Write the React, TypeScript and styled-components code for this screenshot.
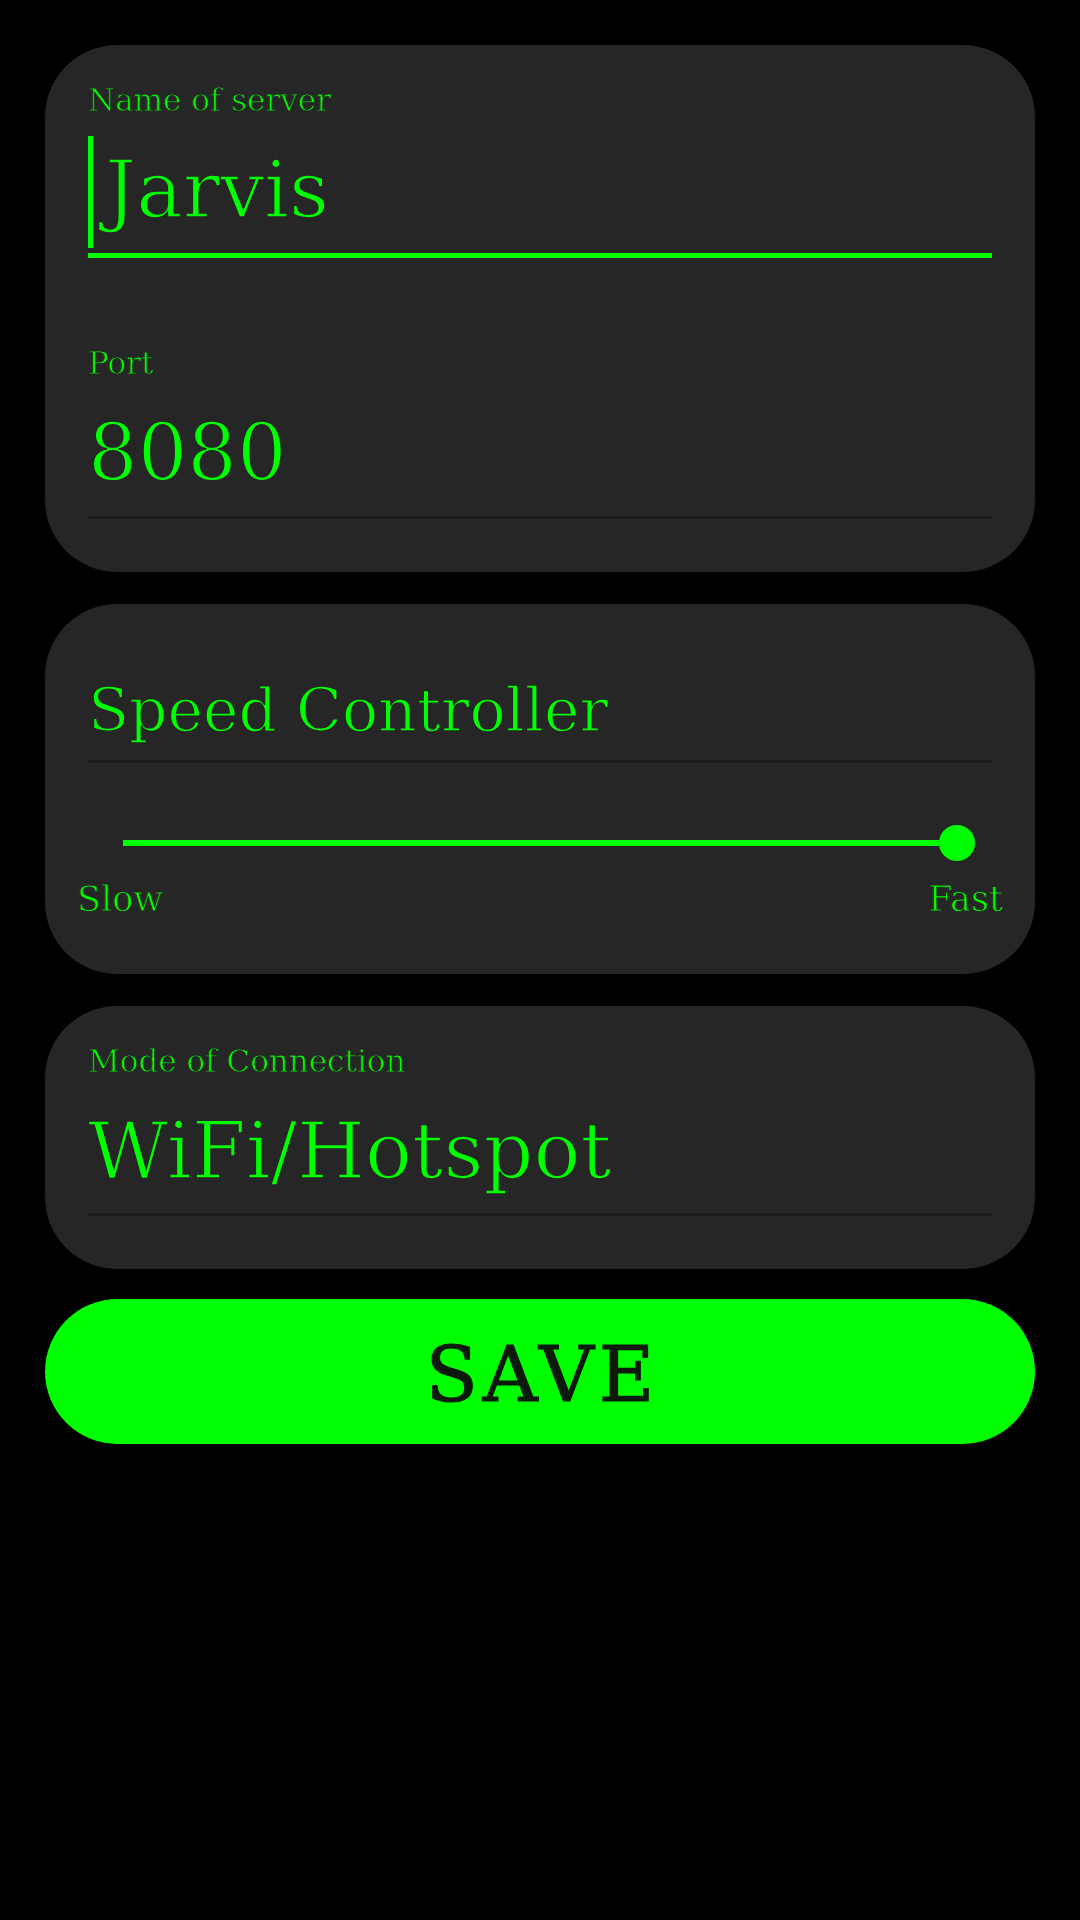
import React from "react";
import styled, { createGlobalStyle } from "styled-components";

const GREEN = "#00ff00";
const CARD_BG = "#262626";
const RULE_DARK = "#1a1a1a";
const INK = "#0c1a0c";
const SERIF = `"DejaVu Serif", "Liberation Serif", serif`;

const Global = createGlobalStyle`
  html, body { margin: 0; padding: 0; background: #000; }
  body { min-height: 1920px; font-family: ${SERIF}; color: ${GREEN}; }
  * { box-sizing: border-box; }
`;

const Page = styled.main`
  display: flex;
  flex-direction: column;
  gap: 32px;
  padding: 45px 45px 0;
`;

const Card = styled.section<{ $pt: number; $pb: number }>`
  background: ${CARD_BG};
  border-radius: 72px;
  padding: ${(p) => p.$pt}px 43px ${(p) => p.$pb}px;
  display: flex;
  flex-direction: column;
`;

const Field = styled.div<{ $mt?: number }>`
  display: flex;
  flex-direction: column;
  margin-top: ${(p) => p.$mt ?? 0}px;
`;

const FieldLabel = styled.label`
  font-family: ${SERIF};
  font-size: 31px;
  line-height: 31px;
  height: 31px;
  color: ${GREEN};
  -webkit-text-stroke: 0.9px ${CARD_BG};
  margin-bottom: 20px;
  white-space: nowrap;
`;

const InputRow = styled.div`
  display: flex;
  align-items: flex-start;
  height: 112px;
  gap: 7px;
`;

const Caret = styled.span`
  width: 5px;
  height: 112px;
  background: ${GREEN};
  flex: none;
`;

const InputText = styled.span<{ $shift?: number }>`
  font-family: ${SERIF};
  font-size: 78px;
  line-height: 108px;
  color: ${GREEN};
  -webkit-text-stroke: 1.7px ${CARD_BG};
  white-space: nowrap;
  margin-left: ${(p) => p.$shift ?? 0}px;
`;

const Rule = styled.div<{ $thick: number; $color: string; $mt: number }>`
  height: ${(p) => p.$thick}px;
  background: ${(p) => p.$color};
  margin-top: ${(p) => p.$mt}px;
`;

const Title = styled.h2`
  margin: 0;
  font-family: ${SERIF};
  font-weight: normal;
  font-size: 60px;
  line-height: 60px;
  height: 60px;
  color: ${GREEN};
  -webkit-text-stroke: 1.4px ${CARD_BG};
  white-space: nowrap;
`;

const SliderArea = styled.div`
  display: flex;
  flex-direction: column;
  margin: 62px -11px 0;
`;

const SliderRow = styled.div`
  display: flex;
  align-items: center;
  height: 36px;
  padding: 0 28px 0 46px;
`;

const Track = styled.div`
  flex: 1;
  height: 6px;
  background: ${GREEN};
`;

const Thumb = styled.div`
  width: 36px;
  height: 36px;
  border-radius: 50%;
  background: ${GREEN};
  flex: none;
`;

const SliderLabels = styled.div`
  display: flex;
  justify-content: space-between;
  margin-top: 21px;
`;

const SliderLabel = styled.span`
  font-family: ${SERIF};
  font-size: 35px;
  line-height: 35px;
  color: ${GREEN};
  -webkit-text-stroke: 0.9px ${CARD_BG};
`;

const SaveButton = styled.button`
  height: 145px;
  margin-top: -2px;
  border: none;
  border-radius: 73px;
  background: ${GREEN};
  display: flex;
  align-items: center;
  justify-content: center;
  padding: 6px 0 0 5px;
  cursor: pointer;
`;

const SaveText = styled.span`
  font-family: ${SERIF};
  font-weight: normal;
  font-size: 76px;
  line-height: 76px;
  color: ${INK};
  -webkit-text-stroke: 1.2px ${INK};
  letter-spacing: 5px;
`;

export default function App() {
  return (
    <>
      <Global />
      <Page>
        <Card $pt={40} $pb={53}>
          <Field>
            <FieldLabel>Name of server</FieldLabel>
            <InputRow>
              <Caret />
              <InputText $shift={5}>Jarvis</InputText>
            </InputRow>
            <Rule $thick={5} $color={GREEN} $mt={5} />
          </Field>
          <Field $mt={90}>
            <FieldLabel>Port</FieldLabel>
            <InputRow>
              <InputText>8080</InputText>
            </InputRow>
            <Rule $thick={3} $color={RULE_DARK} $mt={5} />
          </Field>
        </Card>

        <Card $pt={76} $pb={57}>
          <Title>Speed Controller</Title>
          <Rule $thick={3} $color={RULE_DARK} $mt={20} />
          <SliderArea>
            <SliderRow>
              <Track />
              <Thumb />
            </SliderRow>
            <SliderLabels>
              <SliderLabel>Slow</SliderLabel>
              <SliderLabel>Fast</SliderLabel>
            </SliderLabels>
          </SliderArea>
        </Card>

        <Card $pt={40} $pb={53}>
          <Field>
            <FieldLabel>Mode of Connection</FieldLabel>
            <InputRow>
              <InputText>WiFi/Hotspot</InputText>
            </InputRow>
            <Rule $thick={3} $color={RULE_DARK} $mt={4} />
          </Field>
        </Card>

        <SaveButton>
          <SaveText>SAVE</SaveText>
        </SaveButton>
      </Page>
    </>
  );
}
